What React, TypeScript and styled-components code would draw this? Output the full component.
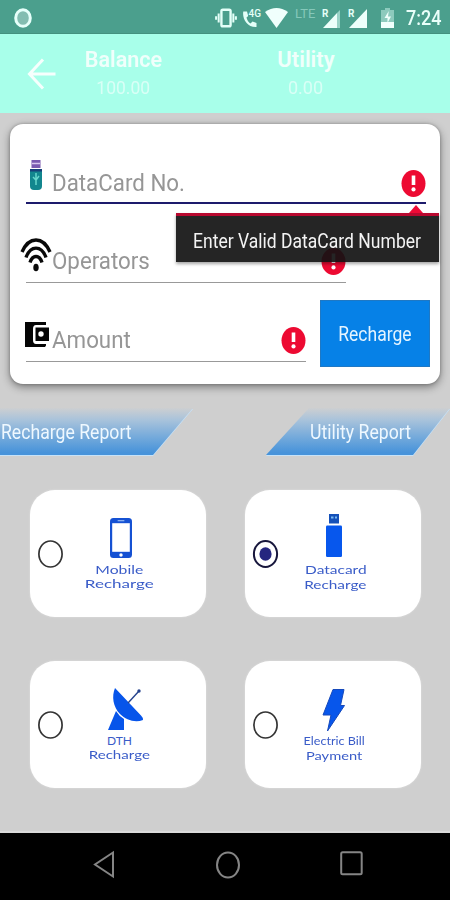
import React from "react";
import styled, { createGlobalStyle } from "styled-components";

const Global = createGlobalStyle`
  * { box-sizing: border-box; }
  body { margin: 0; background: #cfcfcf; font-family: Roboto, "Liberation Sans", sans-serif; }
  svg { display: block; flex: none; overflow: visible; }
`;

const Screen = styled.div`
  width: 450px;
  height: 900px;
  display: flex;
  flex-direction: column;
  overflow: hidden;
  background: #cfcfcf;
`;

const StatusBar = styled.div`
  height: 34px;
  flex: none;
  display: flex;
  align-items: center;
  padding: 2px 8px 0 14px;
  background: #4b9f8d;
  border-bottom: 1px solid #43917f;
  color: #e9fffa;
`;

const Spacer = styled.div<{ $w?: number }>`
  ${(p) => (p.$w ? `width: ${p.$w}px; flex: none;` : "flex: 1;")}
`;

const Label = styled.span<{ $size: number; $sx?: number; $color?: string; $weight?: number; $origin?: string }>`
  display: inline-block;
  white-space: nowrap;
  font-size: ${(p) => p.$size}px;
  line-height: 1.15;
  font-weight: ${(p) => p.$weight ?? 400};
  color: ${(p) => p.$color ?? "inherit"};
  transform: scaleX(${(p) => p.$sx ?? 1});
  transform-origin: ${(p) => p.$origin ?? "left"} center;
`;

const Lte = styled.span`
  width: 23px;
  height: 26px;
  font-size: 13px;
  line-height: 17px;
  color: #86c8ba;
`;

const Clock = styled.span`
  width: 36px;
  font-size: 20.5px;
  line-height: 26px;
  font-weight: 500;
  span { display: inline-block; transform: scaleX(0.88); transform-origin: left; }
`;

const Header = styled.header`
  height: 79px;
  flex: none;
  display: grid;
  grid-template-columns: 72px 102px 80px 104px;
  align-items: start;
  background: #a8ffea;
  color: #f0fffb;
`;

const BackButton = styled.div`
  padding: 24px 0 0 27px;
`;

const Stat = styled.div`
  display: flex;
  flex-direction: column;
  align-items: center;
  padding-top: 13px;
  gap: 5px;
`;

const Body = styled.main`
  flex: 1;
  padding-top: 11px;
  border-bottom: 2px solid #dadada;
`;

const Card = styled.section`
  position: relative;
  height: 260px;
  margin: 0 10px;
  padding: 0 10px 0 16px;
  background: #fff;
  border-radius: 13px;
  box-shadow: 0 3px 9px rgba(0, 0, 0, 0.42), 0 0 3px rgba(0, 0, 0, 0.25);
`;

const Field = styled.div<{ $w: number; $h: number; $active?: boolean }>`
  width: ${(p) => p.$w}px;
  height: ${(p) => p.$h}px;
  display: grid;
  grid-template-columns: 26px 1fr 25px;
  align-items: end;
  padding-bottom: ${(p) => (p.$active ? 4 : 6)}px;
  border-bottom: ${(p) => (p.$active ? "2px solid #1d1b6c" : "1.5px solid #999")};
`;

const FieldIcon = styled.div<{ $left?: number; $bottom?: number }>`
  margin-left: ${(p) => p.$left ?? 0}px;
  padding-bottom: ${(p) => p.$bottom ?? 0}px;
`;

const AmountRow = styled.div`
  display: flex;
  justify-content: space-between;
  align-items: flex-start;
`;

const RechargeButton = styled.button`
  width: 110px;
  height: 67px;
  margin-top: 17px;
  padding: 2px 0 0;
  border: 1px solid #1f78c4;
  background: #0681e7;
  color: #e4f4ff;
  font-family: inherit;
`;

const Tooltip = styled.div`
  position: absolute;
  left: 166px;
  top: 89px;
  width: 263px;
  height: 49px;
  padding: 13px 0 0 17px;
  border-top: 3px solid #b8092f;
  background: rgba(18, 18, 18, 0.92);
  background-clip: padding-box;
  box-shadow: 0 2px 3px rgba(0, 0, 0, 0.35);
  color: #f4f4f4;
  &::before {
    content: "";
    position: absolute;
    right: 16px;
    top: -11px;
    border: 7px solid transparent;
    border-top: 0;
    border-bottom: 8px solid #f00a36;
  }
`;

const Reports = styled.div`
  display: flex;
  justify-content: space-between;
  margin-top: 24px;
  filter: drop-shadow(0 1px 0.5px #c6e2f8);
`;

const ReportTab = styled.div<{ $right?: boolean }>`
  width: ${(p) => (p.$right ? 184 : 193)}px;
  height: 47px;
  padding: 12px 0 0 ${(p) => (p.$right ? 44 : 1)}px;
  color: #eef8ff;
  background: linear-gradient(#cdcfd1 0%, #a9c3db 25%, #77abdb 60%, #4793da 95%);
  clip-path: ${(p) =>
    p.$right ? "polygon(43px 0, 184px 0, 147px 100%, 0 100%)" : "polygon(0 0, 100% 0, 153px 100%, 0 100%)"};
`;

const Options = styled.div`
  display: grid;
  grid-template-columns: 176px 176px;
  grid-auto-rows: 127px;
  gap: 44px 39px;
  margin: 35px 0 0 30px;
`;

const Option = styled.div`
  display: flex;
  align-items: center;
  padding: 0 28px 0 8px;
  background: #fff;
  border-radius: 25px;
  box-shadow: 0 0 2px #e2e2e2;
`;

const OptionBody = styled.div<{ $top: number; $gap: number; $line: number; $shift: number; $textShift: number }>`
  flex: 1;
  align-self: stretch;
  padding-top: ${(p) => p.$top}px;
  display: flex;
  flex-direction: column;
  align-items: center;
  svg { margin: 0 0 ${(p) => p.$gap}px ${(p) => p.$shift * 2}px; }
  span {
    line-height: ${(p) => p.$line}px;
    margin-left: ${(p) => p.$textShift * 2}px;
    font-family: Lato, sans-serif;
  }
`;

const NavBar = styled.nav`
  height: 67px;
  flex: none;
  display: flex;
  justify-content: space-between;
  padding: 18px 87px 0 93px;
  background: #000;
`;

const ErrorIcon = () => (
  <svg width="25" height="29" viewBox="0 0 25 29">
    <ellipse cx="12.5" cy="14.5" rx="12" ry="13.6" fill="#ed0a32" />
    <path d="M12.5 6.5v9.5" stroke="#fff" strokeWidth="3.6" />
    <circle cx="12.5" cy="20.4" r="2.1" fill="#fff" />
  </svg>
);

const Signal = ({ faded }: { faded?: boolean }) => (
  <svg width="21" height="22" viewBox="0 0 21 22">
    {faded && <path d="M18 3v18H15V6z" fill="#9ad3c7" />}
    <path d={faded ? "M1 21L15 6v15z" : "M1 21L19 2v19z"} fill="#edfffb" />
    <text x="0" y="9.5" fontSize="10" fontWeight="700" fill="#e4fff8">R</text>
  </svg>
);

const Radio = ({ checked }: { checked?: boolean }) => (
  <svg width="25" height="28" viewBox="0 0 25 28">
    <ellipse cx="12.5" cy="14" rx="11.6" ry="13" fill="none" stroke={checked ? "#17163c" : "#333"} strokeWidth={checked ? 2 : 1.7} />
    {checked && <ellipse cx="12.5" cy="14" rx="6.1" ry="6.8" fill="#25267f" />}
  </svg>
);

const MobileIcon = () => (
  <svg width="22" height="40" viewBox="0 0 23 40" preserveAspectRatio="none">
    <rect width="23" height="40" rx="3.5" fill="#1551d3" />
    <rect x="2.3" y="5.2" width="18.4" height="28.6" fill="#fff" />
    <path d="M8 2.7h7" stroke="#9fc0f5" strokeWidth="1.1" />
    <circle cx="11.5" cy="37" r="1.8" fill="#fff" />
  </svg>
);

const UsbIcon = () => (
  <svg width="16" height="43" viewBox="0 0 16 43">
    <rect x="3" y="0" width="10" height="9.5" fill="#1551b9" />
    <path d="M5 3.5h2.5M9 3.5h2" stroke="#7bbcf2" strokeWidth="2" />
    <rect x="0" y="11.5" width="16" height="31.5" rx="1.2" fill="#0757ed" />
  </svg>
);

const DishIcon = () => (
  <svg width="36" height="42" viewBox="0 0 36 42">
    <path d="M7 0C3.500 8 5 19 12 26C18 32 27 35 35 32Q35.500 30 33 27.500Z" fill="#0755ea" />
    <path d="M20 15L31 3" stroke="#26438d" strokeWidth="1.4" />
    <circle cx="31" cy="3" r="1.7" fill="#26438d" />
    <path d="M8 23Q11 28 16 31V42H0Z" fill="#0755ea" />
  </svg>
);

const BoltIcon = () => (
  <svg width="24" height="42" viewBox="0 0 24 42">
    <path d="M11 .5H22L18.500 16.500H22.500L5.500 42L9 26H1Z" fill="#0756eb" stroke="#1649bb" strokeWidth="1" />
  </svg>
);

const BLUE = "#3a5cc8";

const options = [
  { icon: <MobileIcon />, lines: ["Mobile", "Recharge"], sx: [1.31, 1.42], size: 12, top: 28, gap: 5, line: 14, shift: 0, textShift: -1 },
  { icon: <UsbIcon />, lines: ["Datacard", "Recharge"], sx: [1.29, 1.28], size: 12, top: 24, gap: 5, line: 15, shift: -2, textShift: 0, checked: true },
  { icon: <DishIcon />, lines: ["DTH", "Recharge"], sx: [1, 1.26], size: 12, top: 27, gap: 4, line: 14, shift: 5, textShift: -1 },
  { icon: <BoltIcon />, lines: ["Electric Bill", "Payment"], sx: [1.05, 1.22], size: 12, top: 28, gap: 2, line: 15, shift: -2, textShift: -1 },
];

export default function App() {
  return (
    <Screen>
      <Global />
      <StatusBar>
        <svg width="18" height="20" viewBox="0 0 18 20">
          <ellipse cx="9" cy="10" rx="7.3" ry="8.3" fill="#83bdb1" stroke="#e6fffa" strokeWidth="3" />
        </svg>
        <Spacer />
        <svg width="22" height="22" viewBox="0 0 24 22" fill="none" stroke="#e4fff8" strokeWidth="2.6">
          <rect x="7" y="2" width="10" height="18" rx="1.5" />
          <path d="M4 6v10M20 6v10M1.2 9v4M22.8 9v4" strokeWidth="2.2" />
        </svg>
        <Spacer $w={4} />
        <svg width="20" height="22" viewBox="0 0 20 22">
          <path d="M2.3 4.5C1 11 6 20.5 15.5 20V16L11.5 14.5L9.5 16.5C7.5 15.5 6 13 5.5 10.500L7.200 9L6 4.500Z" fill="#e4fff8" />
          <text x="7.500" y="9.500" fontSize="11" fontWeight="500" fill="#e4fff8" textLength="12.500" lengthAdjust="spacingAndGlyphs">4G</text>
        </svg>
        <Spacer $w={4} />
        <svg width="23" height="20" viewBox="0 0 23 20">
          <path d="M0 4Q11.5-4 23 4L11.5 20Z" fill="#f0fffc" />
        </svg>
        <Spacer $w={7} />
        <Lte>LTE</Lte>
        <Spacer $w={4} />
        <Signal faded />
        <Spacer $w={5} />
        <Signal />
        <Spacer $w={12} />
        <svg width="13" height="20" viewBox="0 0 13 20">
          <path d="M4 0h5v2h4v18H0V2h4z" fill="#8dcabd" />
          <path d="M0 14h13v6H0z" fill="#f0fffc" />
          <path d="M7.8 3L3.5 10h3v5L10 8.5H7z" fill="#f0fffc" />
        </svg>
        <Spacer $w={12} />
        <Clock><span>7:24</span></Clock>
      </StatusBar>

      <Header>
        <BackButton>
          <svg width="29" height="32" viewBox="0 0 29 32" fill="none" stroke="#f6fffd" strokeWidth="3">
            <path d="M28.5 16H3M16 1.5L2.5 16L16 30.5" />
          </svg>
        </BackButton>
        <Stat>
          <Label $size={22} $weight={600} $sx={0.98} $origin="center">Balance</Label>
          <Label $size={19} $sx={0.92} $origin="center" $color="#d9fff6">100.00</Label>
        </Stat>
        <span />
        <Stat>
          <Label $size={22} $weight={600} $sx={1} $origin="center">Utility</Label>
          <Label $size={19} $sx={0.95} $origin="center" $color="#d9fff6">0.00</Label>
        </Stat>
      </Header>

      <Body>
        <Card>
          <Field $w={400} $h={80} $active>
            <FieldIcon $left={4} $bottom={8}>
              <svg width="12" height="30" viewBox="0 0 12 30">
                <rect x="1.5" y="0" width="9" height="8" fill="#7b5bb0" />
                <path d="M2 3.5h8" stroke="#d9c8ef" strokeWidth="1.5" />
                <path d="M0 9h12v17q0 4-4 4H4q-4 0-4-4z" fill="#12868e" />
                <path d="M0 9h12v2.5H0z" fill="#173f78" />
                <path d="M6 13v12M3 17l3 3 3-4" stroke="#66d6cc" strokeWidth="1.5" fill="none" />
              </svg>
            </FieldIcon>
            <Label $size={24} $sx={0.93} $color="#969696">DataCard No.</Label>
            <ErrorIcon />
          </Field>
          <Field $w={320} $h={79}>
            <FieldIcon $left={-5} $bottom={4}>
              <svg width="30" height="34" viewBox="0 0 30 34" fill="none" stroke="#090909" strokeWidth="3.4">
                <path d="M1 14C8-2 22-2 29 14" />
                <path d="M5 19.5C9.500 7 20.500 7 25 19.500" />
                <path d="M9 24.500C11.500 16.500 18.500 16.500 21 24.500" />
                <ellipse cx="15" cy="29.500" rx="2.700" ry="3.800" fill="#090909" stroke="none" />
              </svg>
            </FieldIcon>
            <Label $size={24} $sx={0.93} $color="#969696">Operators</Label>
            <ErrorIcon />
          </Field>
          <AmountRow>
            <Field $w={280} $h={79}>
              <FieldIcon $left={-1} $bottom={7}>
                <svg width="24" height="27" viewBox="0 0 24 27">
                  <path d="M0 1H21V4H11Q8 4 8 8V19Q8 23 11 23H21V24.5L20 26H0Z" fill="#050505" />
                  <path d="M10.5 6.5H24V20H10.5Z" fill="#050505" />
                  <circle cx="16" cy="13" r="2.7" fill="#fff" />
                </svg>
              </FieldIcon>
              <Label $size={24} $sx={0.93} $color="#969696">Amount</Label>
              <ErrorIcon />
            </Field>
            <RechargeButton>
              <Label $size={21} $sx={0.835} $origin="center">Recharge</Label>
            </RechargeButton>
          </AmountRow>
          <Tooltip>
            <Label $size={21} $sx={0.835}>Enter Valid DataCard Number</Label>
          </Tooltip>
        </Card>

        <Reports>
          <ReportTab>
            <Label $size={21} $sx={0.84}>Recharge Report</Label>
          </ReportTab>
          <ReportTab $right>
            <Label $size={21} $sx={0.84}>Utility Report</Label>
          </ReportTab>
        </Reports>

        <Options>
          {options.map((o) => (
            <Option key={o.lines.join(" ")}>
              <Radio checked={o.checked} />
              <OptionBody $top={o.top} $gap={o.gap} $line={o.line} $shift={o.shift} $textShift={o.textShift}>
                {o.icon}
                {o.lines.map((line, i) => (
                  <Label key={line} $size={o.size} $sx={o.sx[i]} $origin="center" $color={BLUE}>{line}</Label>
                ))}
              </OptionBody>
            </Option>
          ))}
        </Options>
      </Body>

      <NavBar>
        <svg width="22" height="28" viewBox="0 0 22 28" fill="none" stroke="#858585" strokeWidth="2">
          <path d="M20 1.5V25.5L2 13.5Z" />
        </svg>
        <svg width="24" height="28" viewBox="0 0 24 28" fill="none" stroke="#858585" strokeWidth="2">
          <ellipse cx="12" cy="14" rx="11" ry="12.5" />
        </svg>
        <svg width="23" height="25" viewBox="0 0 23 25" fill="none" stroke="#858585" strokeWidth="2">
          <rect x="1.2" y="1.2" width="20.5" height="22" rx="1.5" />
        </svg>
      </NavBar>
    </Screen>
  );
}
